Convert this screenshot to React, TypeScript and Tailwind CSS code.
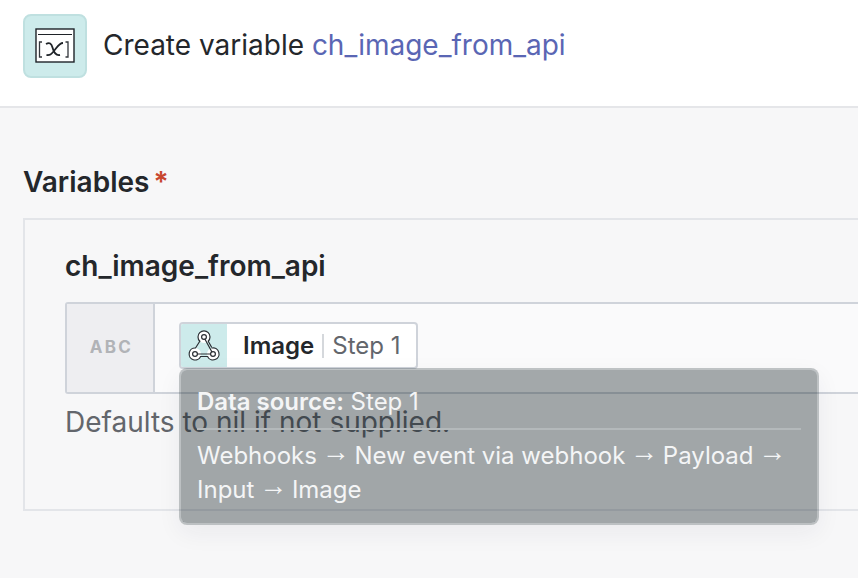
function VariableIcon() {
  return (
    <svg width="40" height="36" viewBox="0 0 40 36" fill="none">
      <rect x="1" y="1" width="38" height="33" fill="#fff" stroke="#1f2328" strokeWidth="1.4" />
      <path d="M3 6.500h34" stroke="#1f2328" strokeWidth="1.200" />
      <path d="M7 14h-2.500v15H7M30.500 14H33v15h-2.500" stroke="#33373c" strokeWidth="1.300" />
      <path d="M11 16c3.500-2 5.500-.5 6.500 3.500s2.500 8.500 7.500 7.500M28 15c-4 0-6 4.500-9 8s-4 4.500-7.500 4" stroke="#1f2328" strokeWidth="1.800" />
    </svg>
  );
}

function WebhookIcon() {
  return (
    <svg width="34" height="34" viewBox="0 0 34 34" fill="none">
      <circle cx="17" cy="8" r="6" fill="#fff" />
      <circle cx="8" cy="25" r="6" fill="#fff" />
      <circle cx="26" cy="25" r="6" fill="#fff" />
      <g stroke="#2a2e33" strokeWidth="1.200" strokeLinecap="round">
        <circle cx="17" cy="8" r="2.400" />
        <circle cx="8" cy="25" r="2.400" />
        <circle cx="26" cy="25" r="2.400" />
        <path d="M12.800 12.200A6 6 0 1 1 21.200 12.200L24.500 18" />
        <path d="M12.800 12.200 8.500 19A6 6 0 1 0 13.600 27.500H20.600A6 6 0 1 0 25 19" />
        <path d="M10.500 25H23.500M18 10.300 24.800 22.800" />
      </g>
    </svg>
  );
}

function Arrow() {
  return <span className="mx-[-2px] align-[3px] font-['Liberation_Sans',sans-serif] text-[28px] leading-none">→</span>;
}

export default function App() {
  return (
    <div className="relative h-[578px] w-[858px] overflow-hidden bg-[#f7f7f8] font-['Inter',sans-serif] text-[#24272b]">
      {/* Header */}
      <div className="flex h-[108px] items-start gap-4 border-b-2 border-[#e5e6e9] bg-white pl-[23px] pt-[14px]">
        <div className="flex h-16 w-16 items-center justify-center rounded-lg border-2 border-[#bfe0e0] bg-[#cdebeb]">
          <VariableIcon />
        </div>
        <div className="mt-[13px] text-[28px] leading-9">
          Create variable <span className="text-[#5a66b4]">ch_image_from_api</span>
        </div>
      </div>

      <div className="pl-[23px] pt-[56px]">
        <div className="flex items-center gap-1 text-[28px] font-semibold leading-9">
          Variables <span className="text-[#c8472f]">*</span>
        </div>

        {/* Card */}
        <div className="mt-[18px] h-[293px] w-[900px] border-2 border-[#e3e5e9] pl-10 pt-[28px]">
          <div className="text-[28px] font-semibold leading-9">ch_image_from_api</div>
          <div className="mt-[18px] flex h-[92px] w-[900px] overflow-hidden rounded-[3px] border-2 border-[#cfd3da] bg-[#fafafb]">
            <div className="flex w-[88px] items-center justify-center border-r-2 border-[#cfd3da] bg-[#eeeef1] pl-[3px] text-[17px] font-bold tracking-[0.14em] text-[#b1b3b7]">
              ABC
            </div>
            <div className="pl-6 pt-[18px]">
              <div className="flex h-[47px] w-[239px] overflow-hidden rounded-[4px] border-2 border-[#cfd3da] bg-white">
                <div className="flex w-[46px] items-center justify-center bg-[#cdebeb]">
                  <WebhookIcon />
                </div>
                <div className="flex items-center pl-4 text-[24px] leading-8">
                  <span className="font-semibold">Image</span>
                  <span className="mx-2 h-[24px] w-[2px] bg-[#d5d8dc]" />
                  <span className="text-[#63666c]">Step 1</span>
                </div>
              </div>
            </div>
          </div>
          <div className="mt-[10px] text-[28px] leading-9 text-[#63666c]">Defaults to nil if not supplied.</div>
        </div>
      </div>

      {/* Tooltip */}
      <div className="absolute left-[179px] top-[368px] h-[157px] w-[640px] rounded-lg border-2 border-[#0d1a1e]/25 bg-[#0d1b20]/[0.37] bg-clip-padding px-4 pt-[17px] text-[24px] leading-[34px] text-[#f4f5f6] shadow-[0_8px_24px_rgba(30,40,60,0.06)]">
        <div className="border-b-2 border-[#b4b9bb] pb-[11px] leading-[30px]">
          <span className="font-semibold">Data source:</span> Step 1
        </div>
        <div className="mt-[8px] leading-[33px]">
          Webhooks <Arrow /> New event via webhook <Arrow /> Payload <Arrow /> Input <Arrow /> Image
        </div>
      </div>
    </div>
  );
}
